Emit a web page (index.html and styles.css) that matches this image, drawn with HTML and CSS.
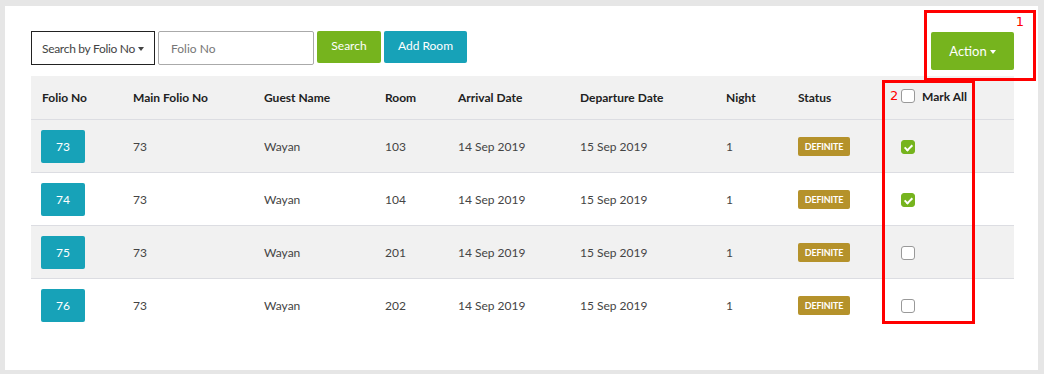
FILE: index.html
```html
<!DOCTYPE html>
<html lang="en">
  <head>
    <meta charset="UTF-8" />
    <meta name="viewport" content="width=device-width, initial-scale=1.0" />
    <title>Folio list</title>
    <link rel="stylesheet" href="styles.css">
  </head>
  <body>
    <div class="card">
      <div class="toolbar">
        <div class="search-group">
          <button class="select-btn">Search by Folio No<span class="caret"></span></button>
          <input class="folio-input" type="text" placeholder="Folio No" />
          <button class="btn btn-green">Search</button>
          <button class="btn btn-teal">Add Room</button>
        </div>
        <button class="btn btn-green btn-action">Action<span class="caret"></span></button>
      </div>

      <table class="folio-table">
        <colgroup>
          <col style="width: 91px" />
          <col style="width: 131px" />
          <col style="width: 121px" />
          <col style="width: 73px" />
          <col style="width: 122px" />
          <col style="width: 146px" />
          <col style="width: 72px" />
          <col style="width: 103px" />
          <col style="width: 124px" />
        </colgroup>
        <thead>
          <tr>
            <th>Folio No</th>
            <th>Main Folio No</th>
            <th>Guest Name</th>
            <th>Room</th>
            <th>Arrival Date</th>
            <th>Departure Date</th>
            <th>Night</th>
            <th>Status</th>
            <th><span class="mark-all"><span class="check"></span>Mark All</span></th>
          </tr>
        </thead>
        <tbody>
          <tr>
            <td><span class="folio-btn">73</span></td>
            <td>73</td>
            <td>Wayan</td>
            <td>103</td>
            <td>14 Sep 2019</td>
            <td>15 Sep 2019</td>
            <td>1</td>
            <td><span class="badge">DEFINITE</span></td>
            <td><span class="check checked"></span></td>
          </tr>
          <tr>
            <td><span class="folio-btn">74</span></td>
            <td>73</td>
            <td>Wayan</td>
            <td>104</td>
            <td>14 Sep 2019</td>
            <td>15 Sep 2019</td>
            <td>1</td>
            <td><span class="badge">DEFINITE</span></td>
            <td><span class="check checked"></span></td>
          </tr>
          <tr>
            <td><span class="folio-btn">75</span></td>
            <td>73</td>
            <td>Wayan</td>
            <td>201</td>
            <td>14 Sep 2019</td>
            <td>15 Sep 2019</td>
            <td>1</td>
            <td><span class="badge">DEFINITE</span></td>
            <td><span class="check"></span></td>
          </tr>
          <tr>
            <td><span class="folio-btn">76</span></td>
            <td>73</td>
            <td>Wayan</td>
            <td>202</td>
            <td>14 Sep 2019</td>
            <td>15 Sep 2019</td>
            <td>1</td>
            <td><span class="badge">DEFINITE</span></td>
            <td><span class="check"></span></td>
          </tr>
        </tbody>
      </table>

      <!-- annotation boxes -->
      <div class="mark mark-1"><span>1</span></div>
      <div class="mark mark-2"><span>2</span></div>
    </div>
  </body>
</html>
```

FILE: styles.css
```css
body {
  margin: 0;
  background: #e6e6e6;
  font-family: Lato, "Noto Sans", sans-serif;
  font-size: 12px;
  color: #444;
}

.card {
  position: relative;
  margin: 6px 6px 4px 5px;
  height: 364px;
  box-sizing: border-box;
  background: #fff;
  padding: 25px 24px 0 26px;
}

.toolbar {
  display: flex;
  justify-content: space-between;
  align-items: flex-start;
}

.search-group {
  display: flex;
  gap: 3px;
}

.select-btn {
  height: 34px;
  width: 124px;
  padding: 0 0 0 10px;
  text-align: left;
  white-space: nowrap;
  background: #fff;
  border: 1px solid #222;
  font-family: inherit;
  font-size: 12px;
  letter-spacing: -0.3px;
  color: #444;
}

.caret {
  display: inline-block;
  width: 0;
  height: 0;
  margin-left: 3px;
  vertical-align: 2px;
  border-left: 3.5px solid transparent;
  border-right: 3.5px solid transparent;
  border-top: 4px solid currentColor;
}

.folio-input {
  height: 34px;
  width: 156px;
  box-sizing: border-box;
  padding: 0 12px;
  border: 1px solid #aaa;
  border-radius: 2px;
  font-family: inherit;
  font-size: 12px;
}

.folio-input::placeholder {
  color: #777;
}

.btn {
  height: 32px;
  border: none;
  border-radius: 2px;
  color: #fff;
  font-family: inherit;
  font-size: 12px;
  padding: 0 0 3px;
}

.btn-green {
  background: #76b41e;
  width: 64px;
}

.btn-teal {
  background: #17a2b8;
  width: 83px;
}

.btn-action {
  width: 83px;
  height: 38px;
  margin-top: 1px;
  padding: 0;
  font-size: 13px;
}

.folio-table {
  margin-top: 6px;
  width: 983px;
  table-layout: fixed;
  border-collapse: collapse;
}

.folio-table th {
  height: 43px;
  padding: 0 0 0 11px;
  text-align: left;
  font-weight: bold;
  color: #222;
  background: #f1f1f1;
  border-bottom: 1px solid #dcdde2;
}

.folio-table td {
  height: 52px;
  padding: 0 0 0 11px;
  border-bottom: 1px solid #dcdde2;
}

.folio-table tbody tr:nth-child(odd) td {
  background: #f1f1f1;
}

.folio-table tbody tr:last-child td {
  border-bottom: none;
}

.folio-btn {
  display: inline-block;
  width: 44px;
  height: 33px;
  line-height: 33px;
  margin-left: -1px;
  text-align: center;
  background: #17a2b8;
  color: #fff;
  border-radius: 2px;
}

.badge {
  display: inline-block;
  width: 52px;
  height: 19px;
  line-height: 19px;
  text-align: center;
  background: #b5922b;
  color: #fff;
  border-radius: 2px;
  font-size: 9px;
  font-weight: bold;
  letter-spacing: -0.2px;
}

.check {
  display: inline-block;
  position: relative;
  width: 14px;
  height: 14px;
  box-sizing: border-box;
  border: 1px solid #999;
  border-radius: 3px;
  background: #fff;
  vertical-align: middle;
}

.check.checked {
  background: #76b41e;
  border-color: #76b41e;
}

.check.checked::after {
  content: "";
  position: absolute;
  left: 4px;
  top: 2px;
  width: 3px;
  height: 6px;
  border: solid #fff;
  border-width: 0 2px 2px 0;
  transform: rotate(45deg);
}

.mark-all {
  display: inline-flex;
  align-items: center;
  gap: 7px;
}

.mark {
  position: absolute;
  border: 3px solid #f00;
  box-sizing: border-box;
}

.mark span {
  position: absolute;
  font-family: "DejaVu Sans", sans-serif;
  font-size: 13px;
  color: #f00;
}

.mark-1 {
  left: 919px;
  top: 4px;
  width: 112px;
  height: 71px;
}

.mark-1 span {
  right: 9px;
  top: 1px;
}

.mark-2 {
  left: 877px;
  top: 74px;
  width: 93px;
  height: 244px;
}

.mark-2 span {
  left: 5px;
  top: 5px;
}
```
